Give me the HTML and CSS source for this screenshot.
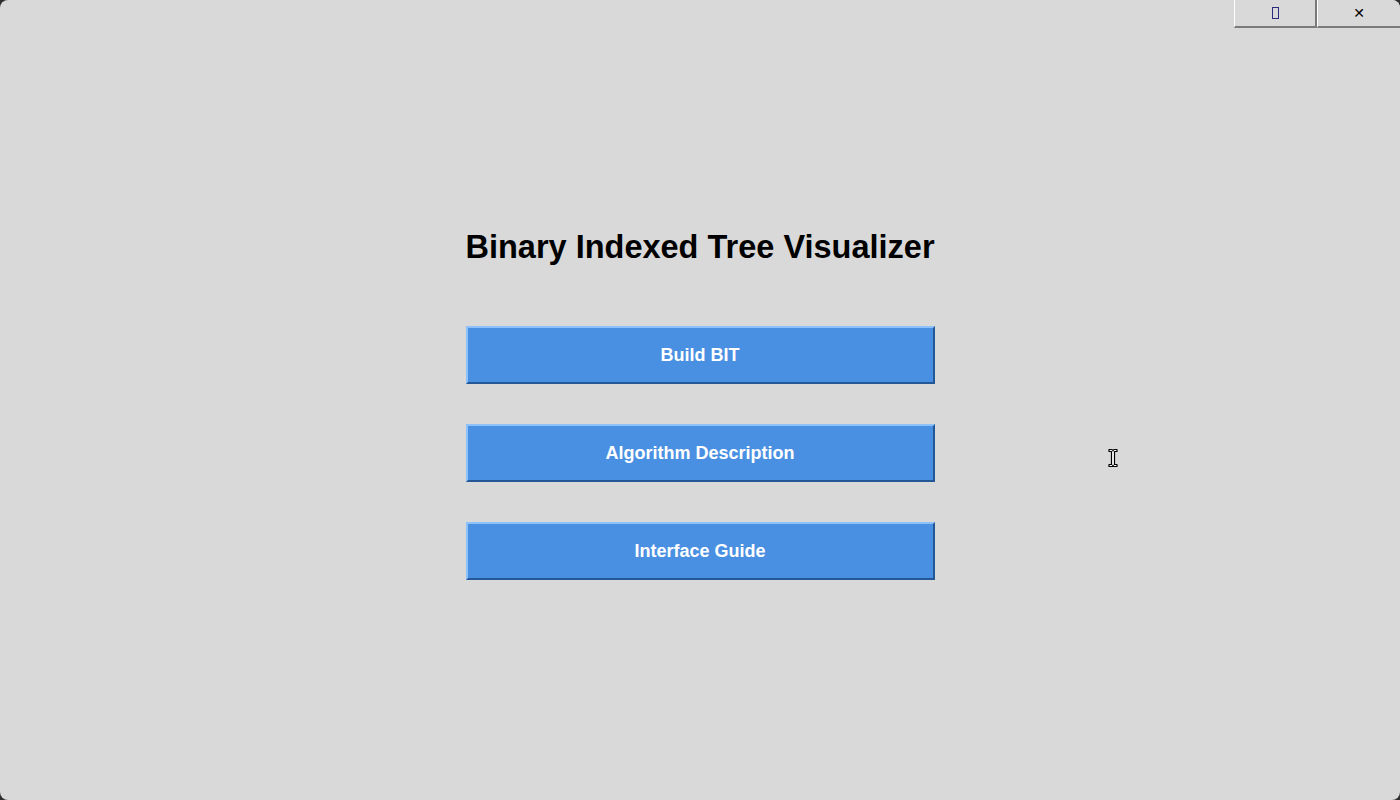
FILE: index.html
```html
<!DOCTYPE html>
<html lang="en">
<head>
<meta charset="utf-8">
<title>Binary Indexed Tree Visualizer</title>
<link rel="stylesheet" href="styles.css">
</head>
<body>
<div class="app">
  <div class="titlebar">
    <button class="win-btn"><span class="box-glyph"></span></button>
    <button class="win-btn">✕</button>
  </div>
  <main class="menu">
    <h1 class="title">Binary Indexed Tree Visualizer</h1>
    <div class="buttons">
      <button class="menu-btn">Build BIT</button>
      <button class="menu-btn">Algorithm Description</button>
      <button class="menu-btn">Interface Guide</button>
    </div>
  </main>
  <svg class="cursor" width="12" height="20" viewBox="0 0 12 20">
    <path d="M2 1.5 H4.5 Q6 1.5 6 3 Q6 1.5 7.5 1.5 H10 V3.5 H7.5 V16.5 H10 V18.5 H7.5 Q6 18.5 6 17 Q6 18.5 4.5 18.5 H2 V16.5 H4.5 V3.5 H2 Z" fill="#fff" stroke="#000" stroke-width="1.2" stroke-linejoin="round"/>
  </svg>
</div>
</body>
</html>
```
FILE: styles.css
```css
html, body {
  margin: 0;
  padding: 0;
  background: #2e2e2e;
}
.app {
  position: relative;
  width: 1400px;
  height: 800px;
  background: #d9d9d9;
  border-radius: 8px;
  overflow: hidden;
  font-family: "Liberation Sans", Arial, sans-serif;
}
.titlebar {
  display: flex;
  justify-content: flex-end;
  height: 28px;
}
.win-btn {
  width: 83px;
  height: 28px;
  margin: 0;
  padding: 0;
  background: #d9d9d9;
  border: none;
  border-left: 1px solid #ffffff;
  border-right: 2px solid #7a7a7a;
  border-bottom: 2px solid #7a7a7a;
  font-family: "DejaVu Sans", sans-serif;
  font-size: 14px;
  color: #000;
  display: flex;
  align-items: center;
  justify-content: center;
  box-sizing: border-box;
}
.win-btn + .win-btn {
  border-right: none;
}
.box-glyph {
  display: inline-block;
  width: 5px;
  height: 10px;
  border: 1px solid #2a2a80;
}
.menu {
  display: flex;
  flex-direction: column;
  align-items: center;
  margin-top: 199px;
}
.title {
  margin: 0;
  font-size: 32.5px;
  line-height: 40px;
  font-weight: bold;
  color: #000;
}
.buttons {
  display: flex;
  flex-direction: column;
  gap: 40px;
  margin-top: 59px;
}
.menu-btn {
  width: 469px;
  height: 58px;
  margin: 0;
  box-sizing: border-box;
  background: #4a90e2;
  color: #ffffff;
  font-family: "Liberation Sans", Arial, sans-serif;
  font-size: 18px;
  font-weight: bold;
  border-style: solid;
  border-width: 2px;
  border-color: #8ec0fa #245796 #245796 #8ec0fa;
  padding: 0;
}
.cursor {
  position: absolute;
  left: 1107px;
  top: 448px;
}
```
